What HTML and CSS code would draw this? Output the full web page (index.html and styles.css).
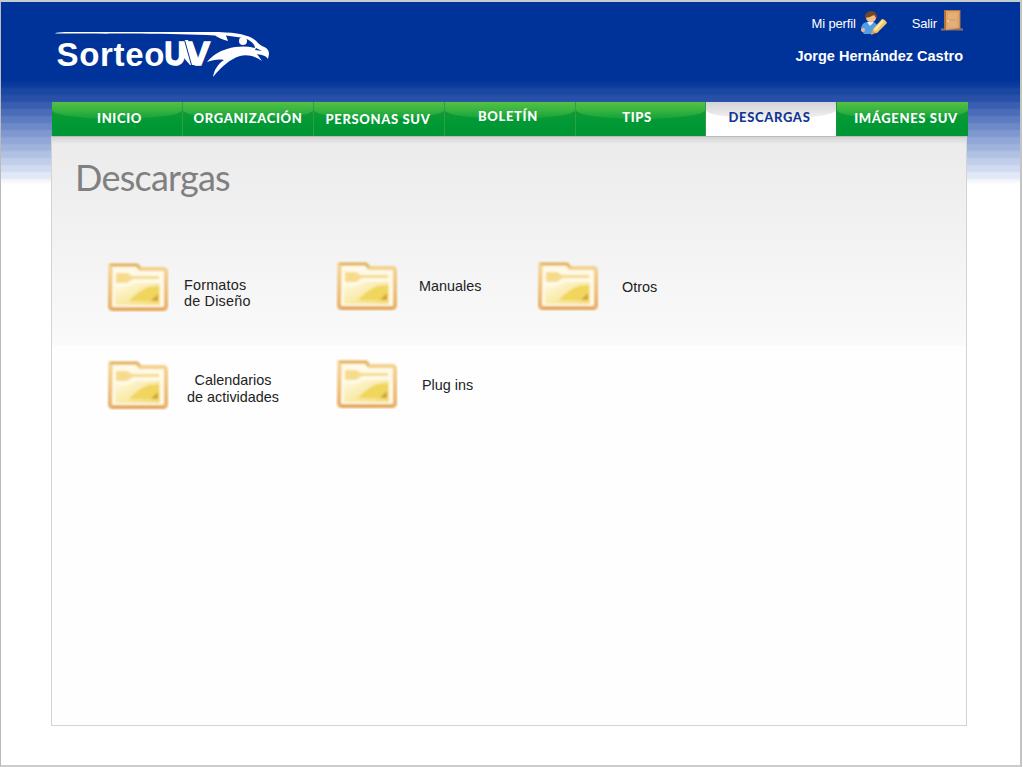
FILE: index.html
```html
<!DOCTYPE html>
<html lang="es">
<head>
<meta charset="utf-8">
<title>Sorteo UV - Descargas</title>
<link rel="stylesheet" href="styles.css">
</head>
<body>
<svg class="defs" width="0" height="0" aria-hidden="true">
  <defs>
    <linearGradient id="front" x1="0" y1="0" x2="1" y2="1"><stop offset="0" stop-color="#fffbe4"/><stop offset="1" stop-color="#f3da72"/></linearGradient>
    <linearGradient id="rim" x1="0" y1="0" x2="0" y2="1"><stop offset="0" stop-color="#f5d490"/><stop offset="1" stop-color="#e8ae61"/></linearGradient>
    <filter id="soft" x="-10%" y="-10%" width="120%" height="120%"><feGaussianBlur stdDeviation="0.9"/></filter>
    <symbol id="folder" viewBox="0 0 62 50">
      <g filter="url(#soft)">
        <path d="M3.500 3H30L33 7H56Q59 7 59 10V44Q59 47 56 47H6Q3 47 3 44Z" fill="#fffae8" stroke="url(#rim)" stroke-width="4"/>
        <path d="M3.500 3H30L33 6" fill="none" stroke="#dba95a" stroke-width="1.800"/>
        <path d="M9 11H20L25 14H52V17H26L20 21H9Z" fill="#f5dc8c"/>
        <path d="M8 25H20L28 21H53V43H8Z" fill="url(#front)"/>
        <path d="M22 39Q32 28 42 25L52 24V39Z" fill="#f0d65c"/>
        <path d="M51 32V39H44Z" fill="#d1a133"/>
        <path d="M5 47.500H57" stroke="#e2a251" stroke-width="2"/>
      </g>
    </symbol>
  </defs>
</svg>
<div class="page">
  <header class="header">
    <svg class="logo" viewBox="0 0 220 52" width="220" height="52" role="img" aria-label="Sorteo UV">
      <text class="logo-sorteo" x="3.500" y="37.500" textLength="108" lengthAdjust="spacing">Sorteo</text>
      <text class="logo-uv" x="111.500" y="37" textLength="21" lengthAdjust="spacingAndGlyphs">U</text>
      <text class="logo-uv" x="133" y="37" textLength="24" lengthAdjust="spacingAndGlyphs">V</text>
      <path d="M131 12H135L143 37H137L131 30Z" fill="#fff"/>
      <path d="M131.500 12L138.500 37" stroke="#039" stroke-width="1"/>
      <path d="M2 5.500Q4 4 12 4H158C180 4 191 6 199 10C204 13 205 16 209 18C214 20 216 22 216 26L215 31C213 28 210 27 204 26L209 33C202 28 194 26 187 28C177 31 168 39 160 49C161 42 165 36 171 32C165 31 160 32 154 34C159 28 166 23 174 21C184 18 193 18 202 20C202 16 197 12 191 10L173 7.500L175 13C170 12 166 10 162 7.500C120 5 60 6 2 5.500Z" fill="#fff"/>
      <circle cx="190" cy="13" r="4" fill="#fff"/>
      <path d="M203 20L209 23L202 22Z" fill="#039"/>
    </svg>
    <div class="account">
      <div class="links">
        <a class="link">Mi perfil
          <svg viewBox="0 0 28 26" width="28" height="26">
            <path d="M1 20Q1 12 8 12H13Q18 13 18 20L13 24H4Z" fill="#519de5"/>
            <path d="M7 12L10 16L14 12Z" fill="#eef5ff"/>
            <circle cx="11" cy="7.500" r="5" fill="#f3bd8a"/>
            <path d="M5 8C4 -1 19 -1 17 9L14 5Q9 8 5 8Z" fill="#764629"/>
            <path d="M13 19L22 9Q25 9 27 13L17 23L13 23Z" fill="#f4c769"/>
            <path d="M15 20L23 11" stroke="#fff0b1" stroke-width="2"/>
            <path d="M12 20L16 23L11 25Z" fill="#dc9c56"/>
            <circle cx="3" cy="20" r="2" fill="#efba86"/>
          </svg>
        </a>
        <a class="link exit">Salir
          <svg viewBox="0 0 22 22" width="22" height="22">
            <path d="M0 19.500H22" stroke="#8f7068" stroke-width="2"/>
            <path d="M3 0H19.500V19H3Z" fill="#b9713a"/>
            <path d="M5 1H18.500V18L5 20Z" fill="#dfa66b"/>
            <path d="M7 3H16V9H7ZM7 11H16V17H7Z" fill="#e4b07a"/>
            <circle cx="7" cy="11" r=".8" fill="#fff0bb"/>
          </svg>
        </a>
      </div>
      <div class="user">Jorge Hernández Castro</div>
    </div>
  </header>
  <nav class="nav">
    <a class="tab inicio"><span>INICIO</span></a>
    <a class="tab organizacion"><span>ORGANIZACIÓN</span></a>
    <a class="tab personas"><span>PERSONAS SUV</span></a>
    <a class="tab boletin"><span>BOLETÍN</span></a>
    <a class="tab tips"><span>TIPS</span></a>
    <a class="tab active"><span>DESCARGAS</span></a>
    <a class="tab imagenes"><span>IMÁGENES SUV</span></a>
  </nav>
  <main class="panel">
    <h1 class="title">Descargas</h1>
    <div class="grid">
      <a class="item formatos"><svg class="folder"><use href="#folder"/></svg><span>Formatos<br>de Diseño</span></a>
      <a class="item manuales"><svg class="folder"><use href="#folder"/></svg><span>Manuales</span></a>
      <a class="item otros"><svg class="folder"><use href="#folder"/></svg><span>Otros</span></a>
      <a class="item calendarios"><svg class="folder"><use href="#folder"/></svg><span>Calendarios<br>de actividades</span></a>
      <a class="item plugins"><svg class="folder"><use href="#folder"/></svg><span>Plug ins</span></a>
    </div>
  </main>
</div>
</body>
</html>
```
FILE: styles.css
```css
* { box-sizing: border-box; }
body { margin: 0; background: #fff; font-family: "Liberation Sans", Arial, sans-serif; overflow: hidden; }
.defs { display: block; height: 0; }
.page {
  width: 1022px; height: 767px;
  border: 1px solid #bbb; border-top: 2px solid #c4ccd0; border-bottom: 2px solid #ccc; border-right: 2px solid #c4c4c4;
  background: linear-gradient(#039 78px, #0f3d9e 85px, #1b47a3 87px 92px, #2850a9 94px 99px, #3a5eb1 101px 106px, #4b6cb8 108px 113px, #5c7bc0 115px 120px, #6d89c8 122px 127px, #7f98d0 129px 134px, #90a7d7 136px 141px, #9fb3dd 143px 148px, #b0c1e4 150px 155px, #c1ceea 157px 162px, #d0daf0 164px 169px, #e1e8f6 171px 176px, #f2f5fb 178px, #fff 183px) #fff;
}
.header { height: 100px; display: flex; justify-content: space-between; padding: 0 57px 0 52px; }
.logo { margin-top: 26px; display: block; }
.logo-sorteo { font: bold 33px "Liberation Sans", Arial, sans-serif; fill: #fff; }
.logo-uv { font: bold 34px "Liberation Sans", Arial, sans-serif; fill: #fff; stroke: #fff; stroke-width: 1.5px; }
.account { color: #fff; padding-top: 8px; }
.links { display: flex; justify-content: flex-end; gap: 24px; height: 28px; }
.link { display: flex; align-items: flex-start; gap: 4px; font-size: 13px; line-height: 27px; letter-spacing: -.15px; }
.link svg { display: block; }
.user { font-size: 14.5px; font-weight: bold; line-height: 18px; margin-top: 9px; text-align: right; white-space: nowrap; }
.nav { width: 916px; height: 34px; margin-left: 51px; display: grid; grid-template-columns: 131px 131px 131px 131px 130px 131px 131px; }
.tab {
  position: relative; height: 34px; display: flex; justify-content: center; padding-top: 8px;
  color: #fff; font: 900 13px/17px Lato, sans-serif; letter-spacing: .65px; white-space: nowrap;
  border-right: 1px solid #2f9f45;
  background: linear-gradient(#1f9434 0, #0a9a35 14px, #009934 20px, #009633 34px);
}
.tab::before {
  content: ""; position: absolute; left: 0; right: 0; top: 0; height: 17px;
  border-radius: 0 0 50% 50% / 0 0 9px 9px;
  background: linear-gradient(#55c142, #2fb040 60%, #12a239);
}
.tab span { position: relative; }
.active { color: #143694; border-right-color: #16953a; background: #fff; }
.active::before { background: linear-gradient(#d4d4d8, #e6e6e8 60%, #f4f4f5); }
.inicio { padding-left: 5px; }
.personas { padding-top: 9px; padding-right: 2px; }
.boletin { padding-top: 6px; padding-right: 4px; }
.tips { padding-top: 7px; padding-right: 7px; }
.active { padding-top: 7px; padding-right: 3px; }
.imagenes { padding-left: 7px; border-right: 0; }
.panel {
  width: 916px; height: 590px; margin-left: 50px; padding: 20px 0 0 24px;
  border: 1px solid #d4d4d4; border-top-color: #b9bdbb;
  background: linear-gradient(#d3d3d6, rgba(232,232,234,0)) 0 0 / 100% 7px no-repeat, linear-gradient(#ebebeb 0, #f0f0f0 70px, #fafafa 208px, #fefefe 209px);
}
.title { margin: 0 0 0 -1px; color: #808080; font: 400 36px/40px Lato, sans-serif; letter-spacing: -.75px; height: 102px; }
.grid { display: grid; grid-template-columns: 229px 201px 200px; grid-template-rows: 98px 98px; padding-left: 31px; }
.item { display: flex; align-items: flex-start; color: #222; font-size: 14.4px; line-height: 16.500px; white-space: nowrap; padding-top: 3px; }
.folder { width: 62px; height: 50px; flex: none; display: block; }
.item span { margin: 15px 0 0 15px; }
.formatos { letter-spacing: .2px; line-height: 16px; }
.manuales, .otros, .plugins { padding-top: 2px; }
.manuales span { margin: 17px 0 0 21px; }
.otros span { margin: 18px 0 0 23px; }
.calendarios span { margin: 12px 0 0 18px; text-align: center; }
.plugins span { margin: 18px 0 0 24px; }
```
